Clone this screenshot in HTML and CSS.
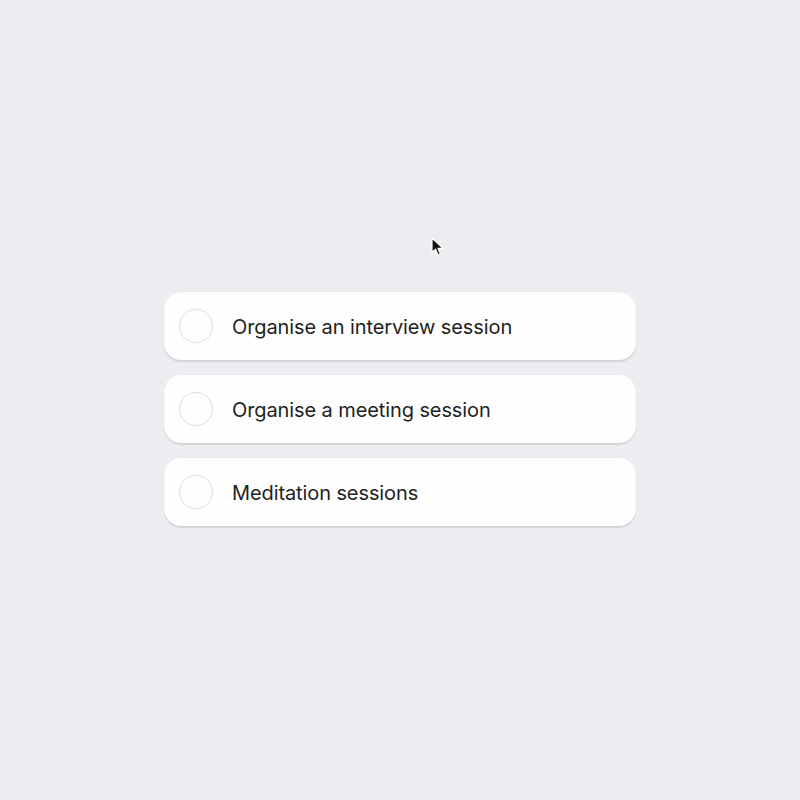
FILE: index.html
```html
<!DOCTYPE html>
<html lang="en">
<head>
<meta charset="utf-8">
<title>Tasks</title>
<link rel="stylesheet" href="styles.css">
</head>
<body>
<main class="page">
  <ul class="task-list">
    <li class="task"><span class="check"></span><span class="label">Organise an interview session</span></li>
    <li class="task"><span class="check"></span><span class="label">Organise a meeting session</span></li>
    <li class="task"><span class="check"></span><span class="label">Meditation sessions</span></li>
  </ul>
  <svg class="cursor" width="14" height="20" viewBox="0 0 14 20" aria-hidden="true">
    <path d="M1 1 L1 15.5 L4.6 12.2 L7 18 L9.4 17 L7 11.4 L12 11.4 Z" fill="#111" stroke="#fff" stroke-width="1.2" stroke-linejoin="round"/>
  </svg>
</main>
</body>
</html>
```

FILE: styles.css
```css
html, body {
  margin: 0;
  padding: 0;
  background: #edecf0;
}
body {
  font-family: Inter, "Noto Sans", "Liberation Sans", sans-serif;
  color: #1f1f22;
}
.page {
  position: relative;
  width: 800px;
  height: 800px;
  box-sizing: border-box;
  padding-top: 292px;
  display: flex;
  flex-direction: column;
  align-items: center;
}
.task-list {
  list-style: none;
  margin: 0;
  padding: 0;
  width: 472px;
  display: flex;
  flex-direction: column;
  gap: 15px;
}
.task {
  height: 68px;
  box-sizing: border-box;
  background: #fefefe;
  border-radius: 17px;
  box-shadow: 0 1.5px 1px rgba(0, 0, 0, 0.1), 0 0 0 0.5px rgba(0, 0, 0, 0.03);
  display: flex;
  align-items: center;
  padding-left: 15px;
}
.check {
  width: 34px;
  height: 34px;
  box-sizing: border-box;
  border: 1.5px solid #dedee2;
  border-radius: 50%;
  flex: none;
}
.label {
  margin-left: 19px;
  padding-top: 2px;
  font-size: 20px;
  font-weight: 400;
  letter-spacing: -0.1px;
}
.cursor {
  position: absolute;
  left: 431px;
  top: 237px;
}
```
